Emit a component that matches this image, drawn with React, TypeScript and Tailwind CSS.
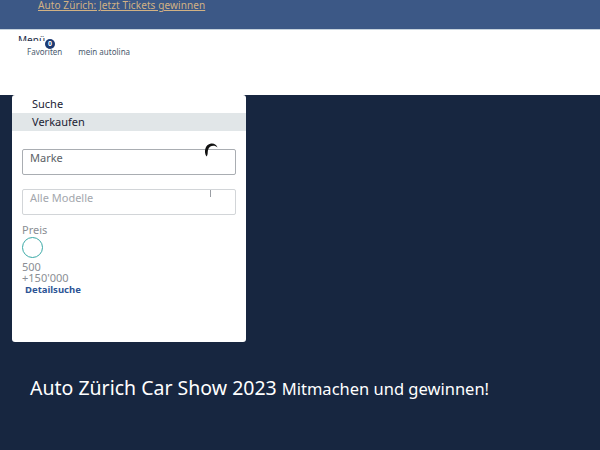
import React from "react";

export default function App() {
  const font = { fontFamily: '"Noto Sans", "Open Sans", sans-serif' };
  return (
    <div className="w-[600px] h-[450px] overflow-hidden bg-[#172640]" style={font}>
      <div className="h-[29px] bg-[#3c5886] pl-[38px] text-[10px] leading-[11px]">
        <a className="text-[10px] leading-[11px] text-[#d2b284] underline tracking-[0.1px]">Auto Zürich: Jetzt Tickets gewinnen</a>
      </div>
      <div className="h-[1px] bg-[#c6d2dc]" />
      <div className="h-[65px] bg-white relative">
        <div className="pl-[18px] h-[11px] overflow-hidden text-[10px] leading-[14px] text-[#1b2a45] pt-[3px]">Menü</div>
        <div className="flex gap-[16px] pl-[27px] pt-[5px] text-[8px] leading-[12px] text-[#4a5a6e]">
          <span className="relative">
            Favoriten
            <span className="absolute left-[18px] top-[-7px] w-[10px] h-[10px] rounded-full bg-[#1c3a73] text-white text-[7px] leading-[10px] text-center font-bold">0</span>
          </span>
          <span>mein autolina</span>
        </div>
      </div>
      <div className="pl-[12px]">
        <div className="w-[234px] h-[247px] bg-white rounded-[3px] flex flex-col">
          <div className="pl-[20px] pt-[1px] h-[18px] text-[11px] leading-[16px] text-[#1b2233]">Suche</div>
          <div className="pl-[20px] h-[18px] bg-[#e1e6e8] text-[11px] leading-[18px] text-[#1b2233]">Verkaufen</div>
          <div className="px-[10px] pt-[18px] flex flex-col">
            <div className="relative h-[26px] border border-[#a9adb2] rounded-[2px] pl-[7px] text-[11px] leading-[15px] text-[#5b5f66]">
              Marke
              <svg className="absolute right-[16px] top-[-9px]" width="16" height="17" viewBox="0 0 16 17">
                <path d="M3.5 15.5 C 0.5 11 2 3.5 8 2.5 C 11 2 14 4 14.5 6.5 C 12 3.5 6 4 5 9 C 4.5 11.5 5 14 3.5 15.5 Z" fill="#111" />
              </svg>
            </div>
            <div className="relative mt-[14px] h-[26px] border border-[#d2d5d8] rounded-[2px] pl-[7px] text-[11px] leading-[15px] text-[#a3a7ad]">
              Alle Modelle
              <span className="absolute right-[24px] top-0 w-[1px] h-[7px] bg-[#9a9ea4]" />
            </div>
            <div className="mt-[8px] text-[11px] leading-[13px] text-[#8a8e94]">Preis</div>
            <div className="mt-[1px] w-[21px] h-[21px] rounded-full border-[1.5px] border-[#3aa9a6]" />
            <div className="mt-[3px] text-[11px] leading-[11px] text-[#8a8e94]">500</div>
            <div className="text-[11px] leading-[12px] text-[#8a8e94]">+150'000</div>
            <div className="pl-[3px] text-[9.5px] leading-[11px] font-bold text-[#2d5596]">Detailsuche</div>
          </div>
        </div>
      </div>
      <div className="pl-[30px] pt-[31px] text-white flex items-baseline gap-[5px]">
        <span className="text-[19.5px]">Auto Zürich Car Show 2023</span>
        <span className="text-[16.5px]">Mitmachen und gewinnen!</span>
      </div>
    </div>
  );
}
